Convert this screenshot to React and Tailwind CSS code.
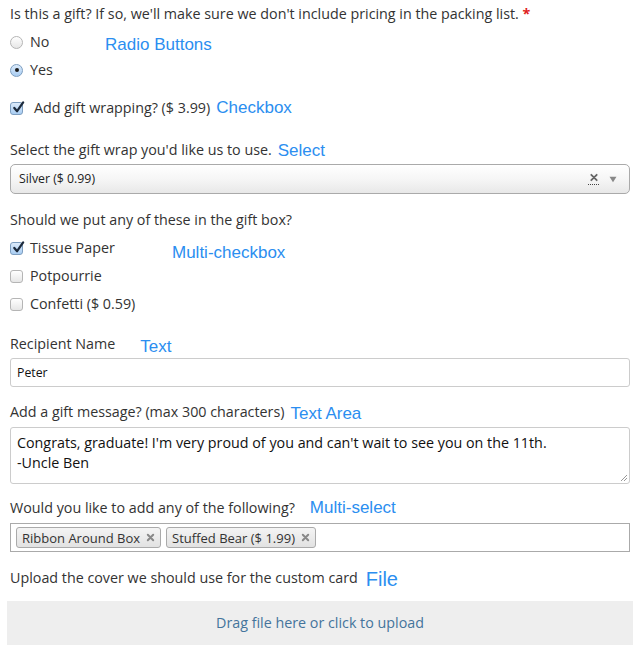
import React from "react";

const note = "text-[#2b8ef0] font-['Liberation_Sans',Arial,sans-serif]";

function Radio({ checked }) {
  return (
    <span
      className={
        "flex h-[13px] w-[13px] shrink-0 items-center justify-center rounded-full border " +
        (checked
          ? "border-[#7d9ec0] bg-gradient-to-b from-[#dcebfb] to-[#a9cdf2]"
          : "border-[#b5b5b5] bg-gradient-to-b from-[#ffffff] to-[#e6e6e6]")
      }
    >
      {checked && <span className="h-[4px] w-[4px] rounded-full bg-[#1a1a1a]" />}
    </span>
  );
}

function Check({ checked }) {
  return (
    <span
      className={
        "relative flex h-[13px] w-[13px] shrink-0 items-center justify-center rounded-[3px] border " +
        (checked
          ? "border-[#7d9ec0] bg-gradient-to-b from-[#dcebfb] to-[#a9cdf2]"
          : "border-[#b5b5b5] bg-gradient-to-b from-[#ffffff] to-[#e6e6e6]")
      }
    >
      {checked && (
        <svg viewBox="0 0 14 14" className="absolute -top-[2px] left-[1px] h-[13px] w-[13px]">
          <path d="M2.5 7.5 L5.5 11 L12 1.5" fill="none" stroke="#1c2a3c" strokeWidth="2.4" strokeLinecap="round" strokeLinejoin="round" />
        </svg>
      )}
    </span>
  );
}

function Tag({ children }) {
  return (
    <span className="flex h-[21px] items-center gap-[6px] rounded-[3px] border border-[#aaaaaa] bg-gradient-to-b from-[#f4f4f4] to-[#e2e2e2] pl-[5px] pr-[5px] text-[13px] text-[#333]">
      {children}
      <svg viewBox="0 0 10 10" className="h-[9px] w-[9px]">
        <path d="M2 2 L8 8 M8 2 L2 8" stroke="#888" strokeWidth="2.2" strokeLinecap="round" />
      </svg>
    </span>
  );
}

export default function App() {
  return (
    <div className="min-h-[656px] w-[640px] bg-white px-[10px] pt-[4px] font-['Open_Sans',sans-serif] text-[14.3px] leading-[20px] text-[#333]">
      <div>
        Is this a gift? If so, we'll make sure we don't include pricing in the packing list.{" "}
        <span className="font-bold text-[#e02020]">*</span>
      </div>

      <div className="mt-[8px] flex h-[20px] items-center">
        <Radio />
        <span className="ml-[7px] w-[75px]">No</span>
        <span className={note + " mt-[6px] text-[17px]"}>Radio Buttons</span>
      </div>
      <div className="mt-[8px] flex h-[20px] items-center">
        <Radio checked />
        <span className="ml-[7px]">Yes</span>
      </div>

      <div className="mt-[18px] flex h-[20px] items-center">
        <Check checked />
        <span className="ml-[11px]">Add gift wrapping? ($ 3.99)</span>
        <span className={note + " ml-[6px] text-[17px]"}>Checkbox</span>
      </div>

      <div className="mt-[22px] flex h-[20px] items-center">
        <span>Select the gift wrap you'd like us to use.</span>
        <span className={note + " ml-[6px] mt-[2px] text-[17px]"}>Select</span>
      </div>
      <div className="mt-[4px] flex h-[30px] items-center rounded-[5px] border border-[#aaaaaa] bg-gradient-to-b from-[#ffffff] via-[#f6f6f6] to-[#e8e8e8] pl-[8px] pr-[12px] text-[12.3px] text-[#222]">
        <span className="flex-1">Silver ($ 0.99)</span>
        <span className="flex flex-col items-center">
          <svg viewBox="0 0 10 10" className="h-[9px] w-[10px]">
            <path d="M2 2 L8 8 M8 2 L2 8" stroke="#666" strokeWidth="2" strokeLinecap="round" />
          </svg>
          <span className="mt-[2px] w-[11px] border-t border-dotted border-[#444]" />
        </span>
        <svg viewBox="0 0 10 10" className="ml-[10px] h-[7px] w-[8px]">
          <path d="M0 1 L10 1 L5 9 Z" fill="#888" />
        </svg>
      </div>

      <div className="mt-[16px] h-[20px]">Should we put any of these in the gift box?</div>
      <div className="mt-[8px] flex h-[20px] items-center">
        <Check checked />
        <span className="ml-[7px] w-[142px]">Tissue Paper</span>
        <span className={note + " mt-[10px] text-[17px]"}>Multi-checkbox</span>
      </div>
      <div className="mt-[8px] flex h-[20px] items-center">
        <Check />
        <span className="ml-[7px]">Potpourrie</span>
      </div>
      <div className="mt-[8px] flex h-[20px] items-center">
        <Check />
        <span className="ml-[7px]">Confetti ($ 0.59)</span>
      </div>

      <div className="mt-[20px] flex h-[20px] items-center">
        <span>Recipient Name</span>
        <span className={note + " ml-[25px] mt-[6px] text-[17px]"}>Text</span>
      </div>
      <div className="mt-[4px] flex h-[29px] items-center rounded-[3px] border border-[#cccccc] px-[6px] text-[12.3px] text-[#111]">
        Peter
      </div>

      <div className="mt-[15px] flex h-[20px] items-center">
        <span>Add a gift message? (max 300 characters)</span>
        <span className={note + " ml-[6px] mt-[3px] text-[17px]"}>Text Area</span>
      </div>
      <div className="relative mt-[5px] h-[57px] rounded-[3px] border border-[#cccccc] px-[6px] pt-[5px] text-[14.3px] leading-[20px] text-[#111]">
        <div>Congrats, graduate! I'm very proud of you and can't wait to see you on the 11th.</div>
        <div>-Uncle Ben</div>
        <svg viewBox="0 0 8 8" className="absolute bottom-[1px] right-[1px] h-[8px] w-[8px]">
          <path d="M7 1 L1 7 M7 4 L4 7" stroke="#999" strokeWidth="1" />
        </svg>
      </div>

      <div className="mt-[14px] flex h-[20px] items-center">
        <span>Would you like to add any of the following?</span>
        <span className={note + " ml-[15px] text-[17px]"}>Multi-select</span>
      </div>
      <div className="mt-[5px] flex h-[29px] items-center gap-[5px] border border-[#aaaaaa] pl-[5px]">
        <Tag>Ribbon Around Box</Tag>
        <Tag>Stuffed Bear ($ 1.99)</Tag>
      </div>

      <div className="mt-[16px] flex h-[20px] items-center">
        <span>Upload the cover we should use for the custom card</span>
        <span className={note + " ml-[8px] mt-[2px] text-[20px]"}>File</span>
      </div>
      <div className="-mx-[3px] mt-[13px] flex h-[44px] items-center justify-center bg-[#eeeeee] text-[14.3px] text-[#44749c]">
        Drag file here or click to upload
      </div>
    </div>
  );
}
